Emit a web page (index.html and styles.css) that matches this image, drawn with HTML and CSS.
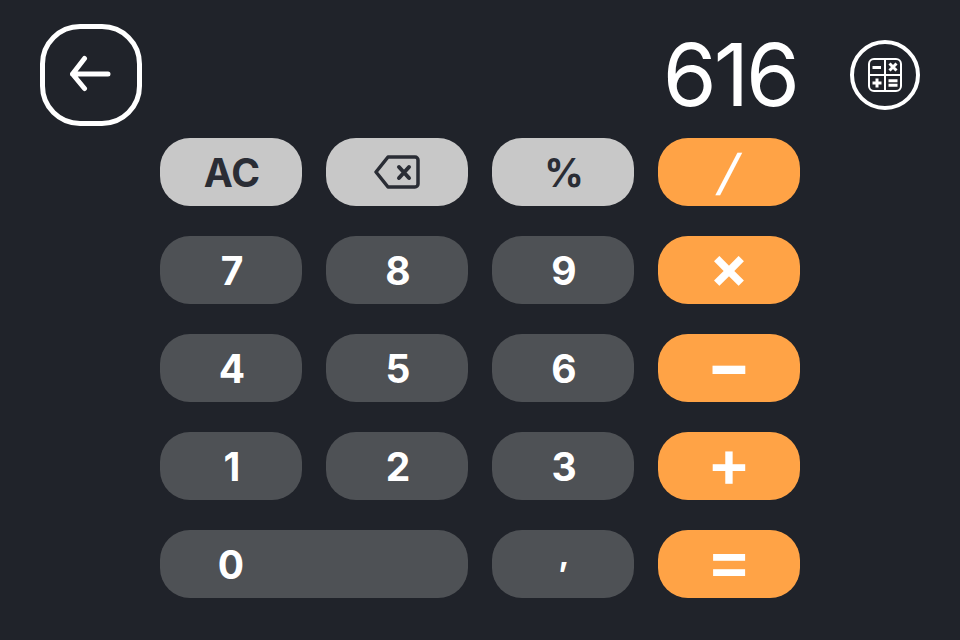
FILE: index.html
```html
<!DOCTYPE html>
<html lang="en">
<head>
<meta charset="utf-8">
<title>Calculator</title>
<link rel="stylesheet" href="styles.css">
</head>
<body>
<main class="app">
  <header class="top">
    <button class="back" aria-label="Back">
      <svg class="back-icon" viewBox="0 0 44 40" width="44" height="40"><path d="M39 19H3.500M15.500 3.500 3.500 19 15.500 33.500"/></svg>
    </button>
    <output class="display">616</output>
    <button class="mode" aria-label="Calculator">
      <svg class="mode-icon" viewBox="0 0 34 34" width="34" height="34">
        <rect x="1" y="1" width="32" height="32" rx="5"/>
        <path d="M17 1V33M1 17H33"/>
        <path class="glyph" d="M4.500 9.500H13M21.500 5.500 28.500 12.500M28.500 5.500 21.500 12.500M4.500 25H13.500M9 20.500V29.500M20.500 22.700H29.500M20.500 27.300H29.500"/>
      </svg>
    </button>
  </header>
  <section class="keys">
    <button class="key light text">AC</button>
    <button class="key light" aria-label="Backspace">
      <svg class="del-icon" viewBox="0 0 46 34" width="46" height="34"><path class="del-body" d="M14 2H41A3 3 0 0 1 44 5V29A3 3 0 0 1 41 32H14L2 17Z"/><path class="del-x" d="M25 12 35 23M35 12 25 23"/></svg>
    </button>
    <button class="key light text">%</button>
    <button class="key op slash"><span>/</span></button>
    <button class="key dark text">7</button>
    <button class="key dark text">8</button>
    <button class="key dark text">9</button>
    <button class="key op sym times">×</button>
    <button class="key dark text">4</button>
    <button class="key dark text">5</button>
    <button class="key dark text">6</button>
    <button class="key op sym minus">−</button>
    <button class="key dark text">1</button>
    <button class="key dark text">2</button>
    <button class="key dark text">3</button>
    <button class="key op sym plus">+</button>
    <button class="key dark wide"><span class="wide-label">0</span></button>
    <button class="key dark comma">,</button>
    <button class="key op sym equals">=</button>
  </section>
</main>
</body>
</html>
```
FILE: styles.css
```css
* { box-sizing: border-box; }
html, body { margin: 0; height: 100%; }
body {
  background: #20232a;
  color: #fff;
  font-family: Inter, "Liberation Sans", sans-serif;
}
.app { width: 960px; height: 640px; padding-top: 24px; overflow: hidden; }
button { font: inherit; color: inherit; background: none; border: 0; padding: 0; }
.top { display: flex; align-items: center; padding: 0 40px; height: 102px; }
.back {
  width: 102px; height: 102px;
  border: 5px solid #fff; border-radius: 40px;
  display: flex; align-items: center; justify-content: center;
}
.back-icon { fill: none; stroke: #fff; stroke-width: 5; stroke-linecap: round; stroke-linejoin: round; }
.display {
  margin-left: auto;
  margin-right: 53px;
  font-size: 87px; font-weight: 380; line-height: 102px;
  letter-spacing: -3px;
}
.mode {
  width: 70px; height: 70px;
  border: 4px solid #fff; border-radius: 50%;
  display: flex; align-items: center; justify-content: center;
}
.mode-icon { fill: none; stroke: #fff; stroke-width: 2; }
.mode-icon .glyph { stroke-width: 3; }
.keys {
  width: 640px; margin: 12px 0 0 160px;
  display: grid;
  grid-template-columns: repeat(4, 142px);
  grid-auto-rows: 68px;
  column-gap: 24px; row-gap: 30px;
}
.key {
  border-radius: 30px;
  display: flex; align-items: center; justify-content: center;
  font-size: 39px; font-weight: 650; line-height: 1;
}
.text { padding-left: 2px; }
.light { background: #c8c8c8; color: #2a2d35; }
.dark { background: #4e5155; }
.op { background: #ffa346; }
.wide { grid-column: span 2; justify-content: flex-start; }
.wide-label { width: 142px; text-align: center; }
.comma { font-size: 33px; font-weight: 700; padding: 0 0 20px 2px; }
.sym { font-size: 66px; font-weight: 700; padding-bottom: 6px; }
.times { font-size: 58px; }
.plus { font-weight: 600; }
.equals { font-size: 70px; font-weight: 500; padding-bottom: 8px; }
.slash { font-size: 49px; font-weight: 500; padding-left: 1px; }
.slash span { transform: skewX(-14deg); }
.del-icon { fill: none; stroke: #2a2d35; stroke-linecap: round; stroke-linejoin: round; }
.del-body { stroke-width: 3.500; }
.del-x { stroke-width: 4; }
```
